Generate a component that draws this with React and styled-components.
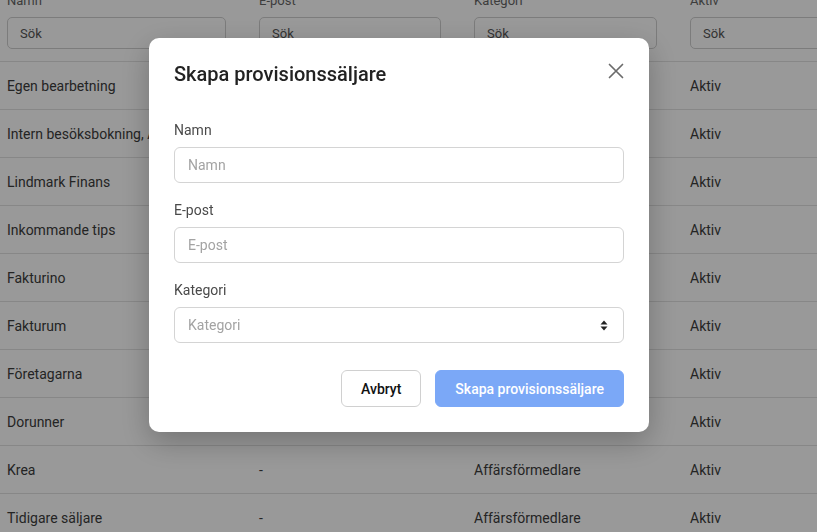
import React from 'react'
import styled, { createGlobalStyle } from 'styled-components'

const GlobalStyle = createGlobalStyle`
    html, body {
        margin: 0;
        padding: 0;
        background: #ffffff;
        font-family: Roboto, "Liberation Sans", Arial, sans-serif;
        overflow: hidden;
    }
    * {
        box-sizing: border-box;
    }
`

const columns = ['Namn', 'E-post', 'Kategori', 'Aktiv']

const rows = [
    { name: 'Egen bearbetning', email: '-', category: 'Affärsförmedlare', active: 'Aktiv' },
    { name: 'Intern besöksbokning, Axel', email: '-', category: 'Affärsförmedlare', active: 'Aktiv' },
    { name: 'Lindmark Finans', email: '-', category: 'Affärsförmedlare', active: 'Aktiv' },
    { name: 'Inkommande tips', email: '-', category: 'Affärsförmedlare', active: 'Aktiv' },
    { name: 'Fakturino', email: '-', category: 'Affärsförmedlare', active: 'Aktiv' },
    { name: 'Fakturum', email: '-', category: 'Affärsförmedlare', active: 'Aktiv' },
    { name: 'Företagarna', email: '-', category: 'Affärsförmedlare', active: 'Aktiv' },
    { name: 'Dorunner', email: '-', category: 'Affärsförmedlare', active: 'Aktiv' },
    { name: 'Krea', email: '-', category: 'Affärsförmedlare', active: 'Aktiv' },
    { name: 'Tidigare säljare', email: '-', category: 'Affärsförmedlare', active: 'Aktiv' },
]

function CloseIcon() {
    return (
        <svg width="16" height="16" viewBox="0 0 16 16" fill="none">
            <path d="M1.5 1.5 L14.5 14.5 M14.5 1.5 L1.5 14.5" stroke="#6b6b6b" strokeWidth="1.7" strokeLinecap="round" />
        </svg>
    )
}

function SortIcon() {
    return (
        <svg width="8" height="11" viewBox="0 0 8 11">
            <path d="M4 0.5 L7.5 4.5 H0.5 Z" fill="#222" />
            <path d="M4 10.5 L7.5 6.5 H0.5 Z" fill="#222" />
        </svg>
    )
}

function App() {
    return (
        <>
            <GlobalStyle />
            <Page>
                <Table>
                    <HeaderRow>
                        {columns.map(col => (
                            <HeaderCell key={col}>
                                <HeaderLabel>{col}</HeaderLabel>
                                <SearchInput placeholder="Sök" />
                            </HeaderCell>
                        ))}
                    </HeaderRow>
                    {rows.map(row => (
                        <Row key={row.name}>
                            <Cell>{row.name}</Cell>
                            <Cell>{row.email}</Cell>
                            <Cell>{row.category}</Cell>
                            <Cell>{row.active}</Cell>
                        </Row>
                    ))}
                </Table>
            </Page>

            <Overlay>
                <Modal>
                    <ModalHeader>
                        <ModalTitle>Skapa provisionssäljare</ModalTitle>
                        <CloseButton aria-label="Stäng">
                            <CloseIcon />
                        </CloseButton>
                    </ModalHeader>
                    <Form>
                        <Field>
                            <Label>Namn</Label>
                            <TextInput placeholder="Namn" />
                        </Field>
                        <Field>
                            <Label>E-post</Label>
                            <TextInput placeholder="E-post" />
                        </Field>
                        <Field>
                            <Label>Kategori</Label>
                            <SelectBox>
                                <span>Kategori</span>
                                <SortIcon />
                            </SelectBox>
                        </Field>
                    </Form>
                    <Actions>
                        <Button>Avbryt</Button>
                        <Button $primary>Skapa provisionssäljare</Button>
                    </Actions>
                </Modal>
            </Overlay>
        </>
    )
}

const Page = styled.div`
    width: 100%;
    height: 532px;
    overflow: hidden;
`

const Table = styled.div`
    margin-top: -7px;
    width: 920px;
`

const gridCols = `252px 215px 216px 1fr`

const HeaderRow = styled.div`
    display: grid;
    grid-template-columns: ${gridCols};
    border-bottom: 1px solid #e2e2e2;
`

const HeaderCell = styled.div`
    display: flex;
    flex-direction: column;
    padding: 0 26px 12px 7px;
`

const HeaderLabel = styled.span`
    font-size: 13px;
    line-height: 16px;
    color: #666;
    margin-bottom: 8px;
`

const SearchInput = styled.input`
    height: 32px;
    width: 100%;
    border: 1px solid #cfcfcf;
    border-radius: 5px;
    padding: 0 12px;
    font-family: inherit;
    font-size: 13px;
    color: #555;
    background: #fff;
    &::placeholder {
        color: #555;
    }
`

const Row = styled.div`
    display: grid;
    grid-template-columns: ${gridCols};
    height: 48px;
    align-items: center;
    border-bottom: 1px solid #e2e2e2;
`

const Cell = styled.div`
    padding: 0 7px;
    font-size: 14px;
    color: #3c3c3c;
    white-space: nowrap;
`

const Overlay = styled.div`
    position: fixed;
    inset: 0;
    background: rgba(0, 0, 0, 0.4);
    display: flex;
    align-items: flex-start;
    padding: 38px 0 0 149px;
`

const Modal = styled.div`
    width: 500px;
    background: #fff;
    border-radius: 10px;
    padding: 22px 25px 25px;
    box-shadow: 0 10px 30px rgba(0, 0, 0, 0.25);
    display: flex;
    flex-direction: column;
`

const ModalHeader = styled.div`
    display: flex;
    align-items: center;
    justify-content: space-between;
    height: 28px;
`

const ModalTitle = styled.h2`
    margin: 0;
    font-size: 20px;
    line-height: 28px;
    font-weight: 500;
    color: #222;
`

const CloseButton = styled.button`
    border: none;
    background: none;
    padding: 0;
    margin-top: -6px;
    display: flex;
    cursor: pointer;
`

const Form = styled.div`
    display: flex;
    flex-direction: column;
    gap: 17px;
    margin-top: 32px;
`

const Field = styled.div`
    display: flex;
    flex-direction: column;
    gap: 7px;
`

const Label = styled.label`
    font-size: 14px;
    line-height: 20px;
    color: #4a4a4a;
`

const TextInput = styled.input`
    height: 36px;
    width: 100%;
    border: 1px solid #d4d4d4;
    border-radius: 6px;
    padding: 0 13px;
    font-family: inherit;
    font-size: 14px;
    color: #222;
    &::placeholder {
        color: #a3a3a3;
    }
`

const SelectBox = styled.div`
    height: 36px;
    border: 1px solid #d4d4d4;
    border-radius: 6px;
    padding: 0 15px 0 13px;
    display: flex;
    align-items: center;
    justify-content: space-between;
    font-size: 14px;
    color: #a3a3a3;
`

const Actions = styled.div`
    display: flex;
    justify-content: flex-end;
    gap: 14px;
    margin-top: 27px;
`

const Button = styled.button`
    height: 37px;
    padding: 0 19px;
    border-radius: 6px;
    font-family: inherit;
    font-size: 14px;
    font-weight: 500;
    cursor: pointer;
    border: 1px solid ${p => (p.$primary ? '#7ba8f7' : '#d0d0d0')};
    background: ${p => (p.$primary ? '#7ba8f7' : '#fff')};
    color: ${p => (p.$primary ? '#fff' : '#111')};
`

export default App
